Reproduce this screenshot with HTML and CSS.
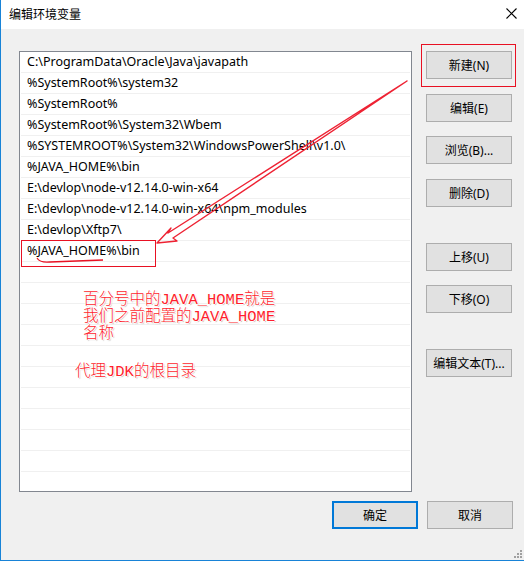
FILE: index.html
```html
<!DOCTYPE html>
<html>
<head>
    <meta charset="UTF-8">
    <title>编辑环境变量</title>
    <link rel="stylesheet" href="styles.css">
</head>
<body>
    <div class="Window">
        <div class="TitleBar">
            <span class="Title">编辑环境变量</span>
            <svg class="CloseIcon" width="11" height="11" viewBox="0 0 11 11">
                <path d="M0.5 0.5 L10.5 10.5 M10.5 0.5 L0.5 10.5" stroke="#000" stroke-width="1.1" fill="none"/>
            </svg>
        </div>

        <div class="Main">
            <div class="PathList">
                <div class="Row">C:\ProgramData\Oracle\Java\javapath</div>
                <div class="Row">%SystemRoot%\system32</div>
                <div class="Row">%SystemRoot%</div>
                <div class="Row">%SystemRoot%\System32\Wbem</div>
                <div class="Row">%SYSTEMROOT%\System32\WindowsPowerShell\v1.0\</div>
                <div class="Row">%JAVA_HOME%\bin</div>
                <div class="Row">E:\devlop\node-v12.14.0-win-x64</div>
                <div class="Row">E:\devlop\node-v12.14.0-win-x64\npm_modules</div>
                <div class="Row">E:\devlop\Xftp7\</div>
                <div class="Row">%JAVA_HOME%\bin</div>
                <div class="Row"></div>
                <div class="Row"></div>
                <div class="Row"></div>
                <div class="Row"></div>
                <div class="Row"></div>
                <div class="Row"></div>
                <div class="Row"></div>
                <div class="Row"></div>
                <div class="Row"></div>
                <div class="Row"></div>
                <div class="Row"></div>
            </div>

            <div class="SideButtons">
                <button class="Btn">新建(N)</button>
                <button class="Btn Step15">编辑(E)</button>
                <button class="Btn">浏览(B)...</button>
                <button class="Btn Step15">删除(D)</button>
                <button class="Btn StepBig">上移(U)</button>
                <button class="Btn">下移(O)</button>
                <button class="Btn StepBig">编辑文本(T)...</button>
            </div>
        </div>

        <div class="Footer">
            <button class="Btn Default">确定</button>
            <button class="Btn">取消</button>
        </div>

        <!-- annotations drawn on top of the dialog -->
        <svg class="Marks" width="524" height="561" viewBox="0 0 524 561">
            <rect x="421.5" y="44.5" width="94" height="42" fill="none" stroke="#e81123" stroke-width="1"/>
            <rect x="21.5" y="240.5" width="134" height="26" fill="none" stroke="#e81123" stroke-width="1"/>
            <path d="M407 81 L168 233 L171 228 L157 243 L177 241 L173 238 Z" fill="none" stroke="#ee2233" stroke-width="1.4" stroke-linejoin="round"/>
            <path d="M37 258 Q40 263 50 262 L103 260" fill="none" stroke="#e81123" stroke-width="1.3"/>
            <g fill="#a0a0a0">
                <rect x="520" y="550" width="2" height="2"/>
                <rect x="517" y="553" width="2" height="2"/>
                <rect x="520" y="553" width="2" height="2"/>
                <rect x="514" y="556" width="2" height="2"/>
                <rect x="517" y="556" width="2" height="2"/>
                <rect x="520" y="556" width="2" height="2"/>
            </g>
        </svg>

        <div class="Note NoteOne">百分号中的JAVA_HOME就是<br>我们之前配置的JAVA_HOME<br>名称</div>
        <div class="Note NoteTwo">代理JDK的根目录</div>
    </div>
</body>
</html>
```

FILE: styles.css
```css
* {
    box-sizing: border-box;
}

body {
    margin: 0;
    background: #f0f0f0;
    font-family: "Noto Sans", "Noto Sans CJK SC", sans-serif;
    font-size: 12px;
    color: #000;
}

.Window {
    position: relative;
    width: 524px;
    height: 561px;
    background: #f0f0f0;
    border-left: 1px solid #1883d7;
    border-bottom: 1px solid #1883d7;
    overflow: hidden;
}

.TitleBar {
    height: 29px;
    background: #fff;
    display: flex;
    align-items: center;
    justify-content: space-between;
    padding: 0 7px 2px 8px;
}

.Title {
    font-family: "Noto Sans CJK SC", sans-serif;
    font-size: 12px;
}

.Main {
    display: flex;
    padding: 22px 0 0 18px;
}

.PathList {
    width: 393px;
    height: 441px;
    background: #fff;
    border: 1px solid #828790;
    overflow: hidden;
}

.Row {
    height: 21px;
    margin: 0 1px;
    padding-left: 6px;
    line-height: 20px;
    font-size: 12.5px;
    border-bottom: 1px solid #f0f0f0;
    white-space: nowrap;
}

.SideButtons {
    display: flex;
    flex-direction: column;
    align-items: flex-start;
    margin-left: 14px;
}

.Btn {
    width: 86px;
    height: 28px;
    margin-top: 14px;
    background: #e1e1e1;
    border: 1px solid #adadad;
    font-family: "Noto Sans", "Noto Sans CJK SC", sans-serif;
    font-size: 12px;
    color: #000;
    padding: 0;
}

.SideButtons .Btn:first-child {
    margin-top: 0;
}

.SideButtons .Step15 {
    margin-top: 15px;
}

.SideButtons .StepBig {
    margin-top: 36px;
}

.Footer {
    display: flex;
    justify-content: flex-end;
    gap: 9px;
    padding: 9px 11px 0 0;
}

.Footer .Btn {
    margin-top: 0;
}

.Footer .Default {
    border: 2px solid #0078d7;
}

.Marks {
    position: absolute;
    left: -1px;
    top: 0;
}

.Note {
    position: absolute;
    font-family: "Liberation Mono", "Noto Sans CJK SC", monospace;
    font-size: 15.5px;
    font-weight: 300;
    line-height: 17px;
    color: #ff1e2d;
    text-shadow: 1px 0 0 #fff, -1px 0 0 #fff, 0 1px 0 #fff, 0 -1px 0 #fff, 1px 1px 1px rgba(0, 0, 0, 0.35);
}

.NoteOne {
    left: 82px;
    top: 292px;
}

.NoteTwo {
    left: 74px;
    top: 364px;
}
```
